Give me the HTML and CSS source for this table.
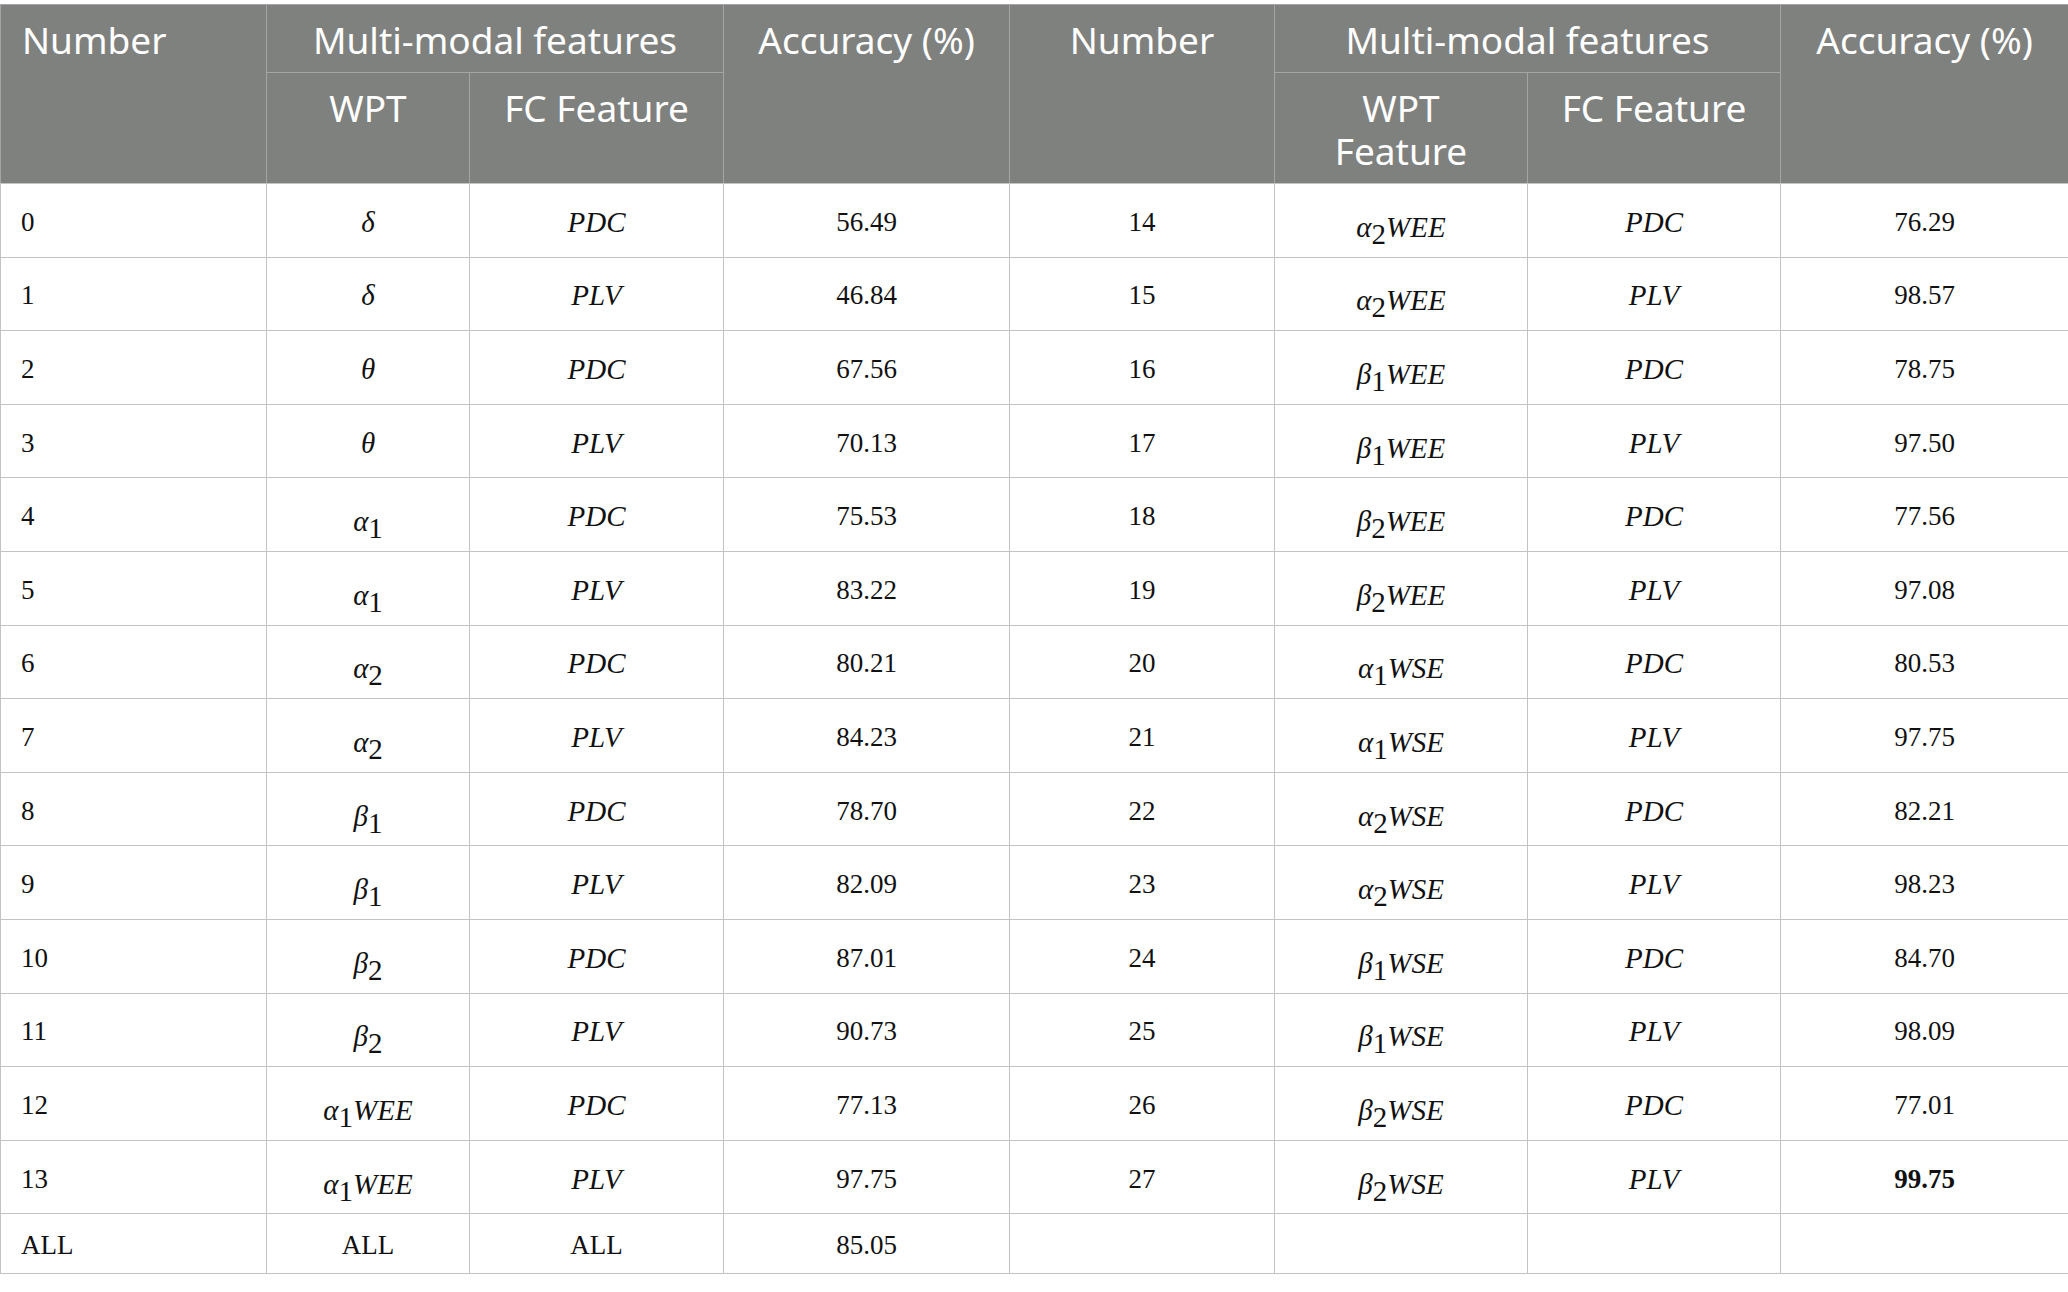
FILE: index.html
```html
<!DOCTYPE html>
<html lang="en">
<head>
<meta charset="utf-8">
<title>Table</title>
<link rel="stylesheet" href="styles.css">
</head>
<body>
<table class="tbl">
  <colgroup>
    <col class="c1"><col class="c2"><col class="c3"><col class="c4">
    <col class="c5"><col class="c6"><col class="c7"><col class="c8">
  </colgroup>
  <thead>
    <tr class="h1">
      <th rowspan="2" class="left">Number</th>
      <th colspan="2">Multi-modal features</th>
      <th rowspan="2">Accuracy (%)</th>
      <th rowspan="2">Number</th>
      <th colspan="2">Multi-modal features</th>
      <th rowspan="2">Accuracy (%)</th>
    </tr>
    <tr class="h2">
      <th>WPT</th>
      <th>FC Feature</th>
      <th>WPT Feature</th>
      <th>FC Feature</th>
    </tr>
  </thead>
  <tbody>
    <tr><td class="left">0</td><td><span class="m">δ</span></td><td><span class="m">PDC</span></td><td>56.49</td><td>14</td><td><span class="m sb">α<sub>2</sub>WEE</span></td><td><span class="m">PDC</span></td><td>76.29</td></tr>
    <tr><td class="left">1</td><td><span class="m">δ</span></td><td><span class="m">PLV</span></td><td>46.84</td><td>15</td><td><span class="m sb">α<sub>2</sub>WEE</span></td><td><span class="m">PLV</span></td><td>98.57</td></tr>
    <tr><td class="left">2</td><td><span class="m">θ</span></td><td><span class="m">PDC</span></td><td>67.56</td><td>16</td><td><span class="m sb">β<sub>1</sub>WEE</span></td><td><span class="m">PDC</span></td><td>78.75</td></tr>
    <tr><td class="left">3</td><td><span class="m">θ</span></td><td><span class="m">PLV</span></td><td>70.13</td><td>17</td><td><span class="m sb">β<sub>1</sub>WEE</span></td><td><span class="m">PLV</span></td><td>97.50</td></tr>
    <tr><td class="left">4</td><td><span class="m sb">α<sub>1</sub></span></td><td><span class="m">PDC</span></td><td>75.53</td><td>18</td><td><span class="m sb">β<sub>2</sub>WEE</span></td><td><span class="m">PDC</span></td><td>77.56</td></tr>
    <tr><td class="left">5</td><td><span class="m sb">α<sub>1</sub></span></td><td><span class="m">PLV</span></td><td>83.22</td><td>19</td><td><span class="m sb">β<sub>2</sub>WEE</span></td><td><span class="m">PLV</span></td><td>97.08</td></tr>
    <tr><td class="left">6</td><td><span class="m sb">α<sub>2</sub></span></td><td><span class="m">PDC</span></td><td>80.21</td><td>20</td><td><span class="m sb">α<sub>1</sub>WSE</span></td><td><span class="m">PDC</span></td><td>80.53</td></tr>
    <tr><td class="left">7</td><td><span class="m sb">α<sub>2</sub></span></td><td><span class="m">PLV</span></td><td>84.23</td><td>21</td><td><span class="m sb">α<sub>1</sub>WSE</span></td><td><span class="m">PLV</span></td><td>97.75</td></tr>
    <tr><td class="left">8</td><td><span class="m sb">β<sub>1</sub></span></td><td><span class="m">PDC</span></td><td>78.70</td><td>22</td><td><span class="m sb">α<sub>2</sub>WSE</span></td><td><span class="m">PDC</span></td><td>82.21</td></tr>
    <tr><td class="left">9</td><td><span class="m sb">β<sub>1</sub></span></td><td><span class="m">PLV</span></td><td>82.09</td><td>23</td><td><span class="m sb">α<sub>2</sub>WSE</span></td><td><span class="m">PLV</span></td><td>98.23</td></tr>
    <tr><td class="left">10</td><td><span class="m sb">β<sub>2</sub></span></td><td><span class="m">PDC</span></td><td>87.01</td><td>24</td><td><span class="m sb">β<sub>1</sub>WSE</span></td><td><span class="m">PDC</span></td><td>84.70</td></tr>
    <tr><td class="left">11</td><td><span class="m sb">β<sub>2</sub></span></td><td><span class="m">PLV</span></td><td>90.73</td><td>25</td><td><span class="m sb">β<sub>1</sub>WSE</span></td><td><span class="m">PLV</span></td><td>98.09</td></tr>
    <tr><td class="left">12</td><td><span class="m sb">α<sub>1</sub>WEE</span></td><td><span class="m">PDC</span></td><td>77.13</td><td>26</td><td><span class="m sb">β<sub>2</sub>WSE</span></td><td><span class="m">PDC</span></td><td>77.01</td></tr>
    <tr><td class="left">13</td><td><span class="m sb">α<sub>1</sub>WEE</span></td><td><span class="m">PLV</span></td><td>97.75</td><td>27</td><td><span class="m sb">β<sub>2</sub>WSE</span></td><td><span class="m">PLV</span></td><td><strong>99.75</strong></td></tr>
    <tr class="last"><td class="left">ALL</td><td>ALL</td><td>ALL</td><td>85.05</td><td></td><td></td><td></td><td></td></tr>
  </tbody>
</table>
</body>
</html>
```

FILE: styles.css
```css
html, body {
  margin: 0;
  padding: 0;
  background: #ffffff;
}

body {
  overflow: hidden;
}

.tbl {
  margin-top: 4px;
  width: 2068px;
  table-layout: fixed;
  border-collapse: separate;
  border-spacing: 0;
  border-bottom: 1px solid #c3c3c3;
}

.c1 { width: 266px; }
.c2 { width: 203px; }
.c3 { width: 254px; }
.c4 { width: 286px; }
.c5 { width: 265px; }
.c6 { width: 253px; }
.c7 { width: 253px; }
.c8 { width: 288px; }

.tbl th {
  background: #7f817f;
  color: #ffffff;
  font-family: "Noto Sans", "Open Sans", sans-serif;
  font-weight: 400;
  font-size: 37px;
  line-height: 43px;
  text-align: center;
  vertical-align: top;
  padding: 13px 20px 0;
  border-left: 1px solid #a4a5a4;
  border-top: 1px solid #a4a5a4;
}

.tbl th.left {
  text-align: left;
  padding-left: 21px;
}

.h1 { height: 68px; }
.h2 { height: 111px; }

.tbl td {
  font-family: "Liberation Serif", "Times New Roman", serif;
  font-size: 27px;
  color: #111111;
  text-align: center;
  vertical-align: middle;
  padding: 4px 20px 0;
  border-left: 1px solid #c3c3c3;
  border-top: 1px solid #c3c3c3;
  height: 73.6px;
  box-sizing: border-box;
}

.tbl td.left {
  text-align: left;
}

.tbl tr.last td {
  height: 60px;
}

.m {
  font-style: italic;
  font-size: 29px;
}

.m.sb {
  display: inline-block;
  padding-top: 10px;
}

.m sub {
  font-size: 1em;
  font-style: normal;
  vertical-align: -0.24em;
  line-height: 0;
}

strong {
  font-weight: 700;
}
```
